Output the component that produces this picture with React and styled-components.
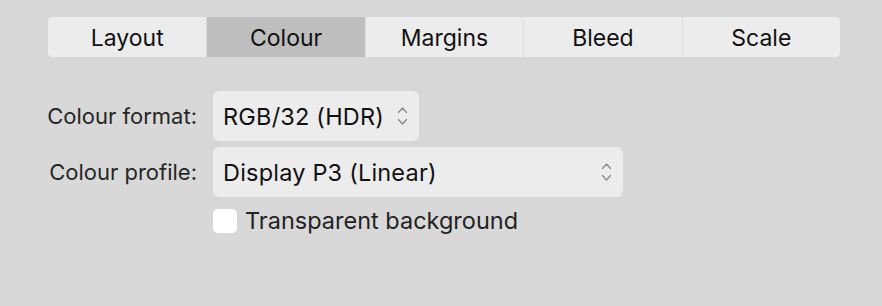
import React from "react";
import styled, { createGlobalStyle } from "styled-components";

const Global = createGlobalStyle`
  html, body { margin: 0; padding: 0; background: #d8d8d8; }
  body { font-family: Inter, "Noto Sans", sans-serif; -webkit-font-smoothing: antialiased; }
`;

const Page = styled.div`
  width: 882px;
  height: 306px;
  box-sizing: border-box;
  padding: 17px 42px 0 48px;
  background: #d8d8d8;
`;

const TabBar = styled.div`
  display: grid;
  grid-template-columns: repeat(5, 1fr);
  width: 792px;
  height: 40px;
  border-radius: 5px;
  overflow: hidden;
  background: #ececec;
`;

const Tab = styled.div`
  display: flex;
  align-items: center;
  justify-content: center;
  padding-top: 1px;
  font-size: 23px;
  color: #111;
  background: ${p => (p.$active ? "#bebebe" : "#ececec")};
  border-left: ${p => (p.$first ? "none" : "1.5px solid #dedede")};
`;

const Form = styled.div`
  display: grid;
  grid-template-columns: 197px auto;
  column-gap: 16px;
  row-gap: 6px;
  margin-top: 34px;
  margin-left: -48px;
  align-items: center;
  justify-items: start;
`;

const Label = styled.div`
  justify-self: end;
  font-size: 22px;
  color: #262626;
`;

const Popup = styled.div`
  display: flex;
  align-items: center;
  justify-content: space-between;
  box-sizing: border-box;
  width: ${p => p.$w}px;
  height: 50px;
  padding: 0 11px 0 10px;
  border-radius: 6px;
  background: #ececec;
  font-size: 23.5px;
  letter-spacing: 0.2px;
  color: #111;
`;

const Check = styled.label`
  grid-column: 2;
  display: flex;
  align-items: center;
  gap: 8px;
  margin-top: 3px;
  font-size: 23.5px;
  color: #222;
`;

const Box = styled.span`
  width: 24px;
  height: 24px;
  border-radius: 5px;
  background: #fff;
`;

const Chevrons = () => (
  <svg width="11" height="20" viewBox="0 0 11 20" fill="none" stroke="#8a8a8a" strokeWidth="1.3" strokeLinecap="round" strokeLinejoin="round">
    <path d="M1.5 6.5 L5.5 2 L9.5 6.5" />
    <path d="M1.5 13.5 L5.5 18 L9.5 13.5" />
  </svg>
);

const tabs = ["Layout", "Colour", "Margins", "Bleed", "Scale"];

export default function App() {
  return (
    <Page>
      <Global />
      <TabBar>
        {tabs.map((t, i) => (
          <Tab key={t} $active={t === "Colour"} $first={i === 0}>{t}</Tab>
        ))}
      </TabBar>
      <Form>
        <Label>Colour format:</Label>
        <Popup $w={206}>RGB/32 (HDR)<Chevrons /></Popup>
        <Label>Colour profile:</Label>
        <Popup $w={410}>Display P3 (Linear)<Chevrons /></Popup>
        <Check><Box />Transparent background</Check>
      </Form>
    </Page>
  );
}
